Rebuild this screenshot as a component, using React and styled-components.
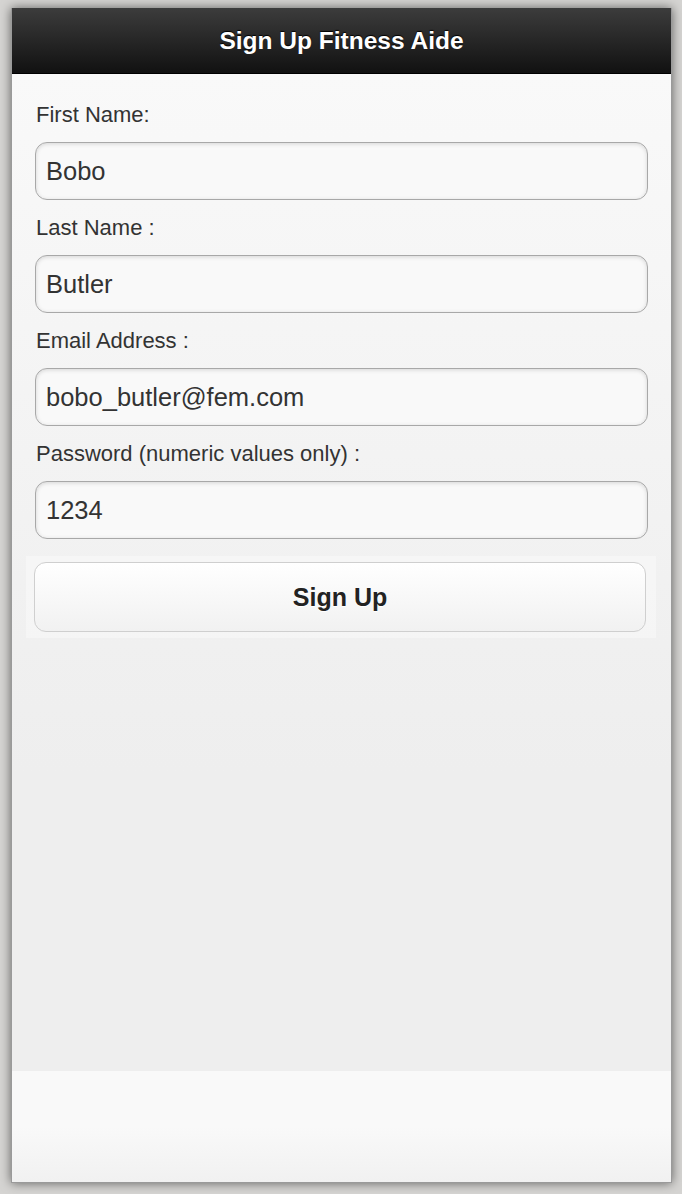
import React from "react";
import styled, { createGlobalStyle } from "styled-components";

const GlobalStyle = createGlobalStyle`
    html, body {
        margin: 0;
        padding: 0;
        background: #d5d4d2;
    }
    body {
        font-family: "Liberation Sans", Arial, Helvetica, sans-serif;
    }
`;

const Screen = styled.div`
    width: 682px;
    height: 1194px;
    padding: 8px 10px 11px 11px;
    box-sizing: border-box;
`;

const Phone = styled.div`
    height: 100%;
    display: flex;
    flex-direction: column;
    box-shadow: 0 0 10px rgba(0, 0, 0, 0.55);
    border: 1px solid #9a9a9a;
    border-top: none;
    box-sizing: border-box;
    overflow: hidden;
`;

const Header = styled.header`
    height: 65px;
    flex: none;
    display: flex;
    align-items: center;
    justify-content: center;
    background: linear-gradient(#3c3c3c, #111111);
    border-bottom: 1px solid #000;
`;

const Title = styled.h1`
    margin: 0;
    color: #fff;
    font-size: 24.5px;
    font-weight: bold;
    text-shadow: 0 -1px 1px #000;
`;

const Content = styled.main`
    flex: 1;
    display: flex;
    flex-direction: column;
    padding: 28px 23px 0 23px;
    background: linear-gradient(#f9f9f9, #eeeeee 70%, #eeeeee);
`;

const Field = styled.div`
    display: flex;
    flex-direction: column;
    margin-bottom: 15px;
`;

const Label = styled.label`
    font-size: 22px;
    line-height: 26px;
    color: #333;
    margin: 0 0 14px 1px;
`;

const Input = styled.input`
    height: 58px;
    box-sizing: border-box;
    border: 1px solid #a8a8a8;
    border-radius: 12px;
    background: #f9f9f9;
    box-shadow: inset 0 1px 4px rgba(0, 0, 0, 0.15);
    padding: 0 10px;
    font-family: "Liberation Sans", Arial, Helvetica, sans-serif;
    font-size: 25.5px;
    color: #333;
    outline: none;
`;

const ButtonWrap = styled.div`
    margin: 2px -8px 0 -9px;
    padding: 6px 10px 6px 8px;
    background: rgba(255, 255, 255, 0.35);
`;

const Button = styled.button`
    width: 100%;
    height: 70px;
    border: 1px solid #cfcfcf;
    border-radius: 12px;
    background: linear-gradient(#ffffff, #f1f1f1);
    font-family: "Liberation Sans", Arial, Helvetica, sans-serif;
    font-size: 25px;
    font-weight: bold;
    color: #222;
    text-shadow: 0 1px 0 #fff;
    cursor: pointer;
`;

const Footer = styled.footer`
    height: 111px;
    flex: none;
    background: linear-gradient(#f9f9f9, #f9f9f9 50%, #f1f1f1);
`;

const fields = [
    { label: "First Name:", value: "Bobo", type: "text" },
    { label: "Last Name :", value: "Butler", type: "text" },
    { label: "Email Address :", value: "bobo_butler@fem.com", type: "email" },
    { label: "Password (numeric values only) :", value: "1234", type: "text" },
];

const App = () => {
    return (
        <Screen>
            <GlobalStyle />
            <Phone>
                <Header>
                    <Title>Sign Up Fitness Aide</Title>
                </Header>
                <Content>
                    {fields.map(f => (
                        <Field key={f.label}>
                            <Label>{f.label}</Label>
                            <Input type={f.type} defaultValue={f.value} />
                        </Field>
                    ))}
                    <ButtonWrap>
                        <Button>Sign Up</Button>
                    </ButtonWrap>
                </Content>
                <Footer />
            </Phone>
        </Screen>
    );
};

export default App;
